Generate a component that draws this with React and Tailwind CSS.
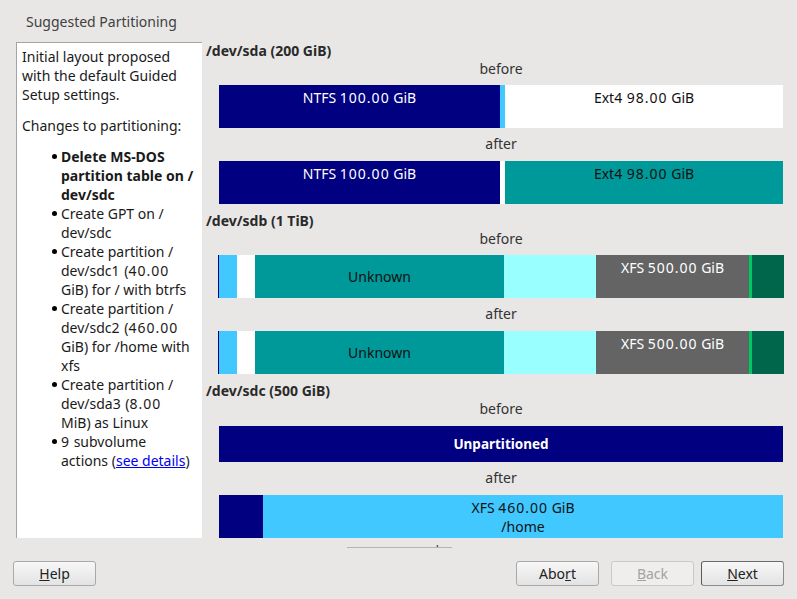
import React from "react";

function D({ children }) {
  return <span className="tracking-[1px]">{children}</span>;
}

function Seg({ w, bg, children, className = "" }) {
  return (
    <div
      className={`shrink-0 h-full overflow-hidden whitespace-nowrap ${bg} ${className}`}
      style={w ? { width: w } : undefined}
    >
      {children}
    </div>
  );
}

function Label({ children, className = "" }) {
  return (
    <div className={`ml-[13px] w-[564px] h-[18px] leading-[18px] text-center text-[14px] text-[#333333] ${className}`}>
      {children}
    </div>
  );
}

function Header({ children, className = "" }) {
  return (
    <div className={`h-[18px] leading-[18px] text-[14px] font-bold text-[#2a2a2a] ${className}`}>
      {children}
    </div>
  );
}

function Btn({ children, disabled, primary, className = "" }) {
  return (
    <div
      className={`h-[25px] w-[83px] rounded-[3px] border flex items-center justify-center text-[14px] ${
        disabled
          ? "border-[#c9c9c9] bg-[#efeeed] text-[#a3a3a3]"
          : primary
          ? "border-[#8c8c8c] border-l-[#5a5a5a] border-t-[#6a6a6a] bg-gradient-to-b from-[#f7f7f7] to-[#e3e3e3] text-[#222222]"
          : "border-[#a9a9a9] bg-gradient-to-b from-[#f7f7f7] to-[#e3e3e3] text-[#222222]"
      } ${className}`}
    >
      {children}
    </div>
  );
}

export default function App() {
  return (
    <div className="w-[797px] h-[599px] bg-[#e8e7e6] font-['Noto_Sans',sans-serif] flex flex-col overflow-hidden">
      {/* Title */}
      <div className="h-[42px] pl-[26px] pt-[12px] text-[14px] leading-[20px] text-[#404040]">
        Suggested Partitioning
      </div>

      {/* Main */}
      <div className="flex h-[496px]">
        {/* Left panel */}
        <div className="ml-[16px] w-[186px] shrink-0 bg-white border-l border-t border-[#a4a4a4] pl-[5px] pt-[4px] text-[14px] leading-[19px] text-[#1a1a1a] whitespace-nowrap overflow-hidden">
          <div>
            Initial layout proposed
            <br />
            with the default Guided
            <br />
            Setup settings.
          </div>
          <div className="mt-[12px]">Changes to partitioning:</div>
          <div className="mt-[12px] ml-[30px]">
            {[
              <b key="b">Delete MS-DOS<br />partition table on /<br />dev/sdc</b>,
              <span key="s">Create GPT on /<br />dev/sdc</span>,
              <span key="s">Create partition /<br />dev/sdc<D>1</D> (<D>40.00</D><br />GiB) for / with btrfs</span>,
              <span key="s">Create partition /<br />dev/sdc<D>2</D> (<D>460.00</D><br />GiB) for /home with<br />xfs</span>,
              <span key="s">Create partition /<br />dev/sda<D>3</D> (<D>8.00</D><br />MiB) as Linux</span>,
              <span key="s">
                <D>9</D> subvolume
                <br />
                actions (<span className="text-[#0000ee] underline">see details</span>)
              </span>,
            ].map((item, i) => (
              <div key={i} className="flex">
                <div className="w-[5px] h-[5px] rounded-full bg-black mt-[7px] mr-[4px] shrink-0" />
                <div>{item}</div>
              </div>
            ))}
          </div>
        </div>

        {/* Right scroll area */}
        <div className="flex-1 pl-[4px] overflow-hidden">
          {/* sda */}
          <Header>/dev/sda (200 GiB)</Header>
          <Label>before</Label>
          <div className="ml-[13px] mt-[7px] w-[564px] h-[43px] flex text-[14px] leading-[18px] text-center">
            <Seg w={281} bg="bg-[#000080]" className="text-white pt-[4px]">NTFS <D>100.00</D> GiB</Seg>
            <Seg w={5} bg="bg-[#40c8ff]" />
            <Seg w={278} bg="bg-white" className="text-[#111111] pt-[4px]">Ext<D>4</D> <D>98.00</D> GiB</Seg>
          </div>
          <Label className="mt-[7px]">after</Label>
          <div className="ml-[13px] mt-[8px] w-[564px] h-[43px] flex text-[14px] leading-[18px] text-center">
            <Seg w={281} bg="bg-[#000080]" className="text-white pt-[4px]">NTFS <D>100.00</D> GiB</Seg>
            <Seg w={5} bg="bg-white" />
            <Seg w={278} bg="bg-[#009999]" className="text-[#111111] pt-[4px]">Ext<D>4</D> <D>98.00</D> GiB</Seg>
          </div>

          {/* sdb */}
          <Header className="mt-[8px]">/dev/sdb (1 TiB)</Header>
          <Label>before</Label>
          <div className="ml-[12px] mt-[7px] w-[566px] h-[43px] flex text-[14px] leading-[18px] text-center">
            <Seg w={1} bg="bg-[#000080]" />
            <Seg w={18} bg="bg-[#40c8ff]" />
            <Seg w={18} bg="bg-white" />
            <Seg w={249} bg="bg-[#009999]" className="text-[#111111] flex items-center justify-center">Unknown</Seg>
            <Seg w={92} bg="bg-[#99ffff]" />
            <Seg w={153} bg="bg-[#646464]" className="text-white pt-[4px]">XFS <D>500.00</D> GiB</Seg>
            <Seg w={3} bg="bg-[#00c864]" />
            <Seg w={32} bg="bg-[#00664b]" />
          </div>
          <Label className="mt-[7px]">after</Label>
          <div className="ml-[12px] mt-[8px] w-[566px] h-[43px] flex text-[14px] leading-[18px] text-center">
            <Seg w={1} bg="bg-[#000080]" />
            <Seg w={18} bg="bg-[#40c8ff]" />
            <Seg w={18} bg="bg-white" />
            <Seg w={249} bg="bg-[#009999]" className="text-[#111111] flex items-center justify-center">Unknown</Seg>
            <Seg w={92} bg="bg-[#99ffff]" />
            <Seg w={153} bg="bg-[#646464]" className="text-white pt-[4px]">XFS <D>500.00</D> GiB</Seg>
            <Seg w={3} bg="bg-[#00c864]" />
            <Seg w={32} bg="bg-[#00664b]" />
          </div>

          {/* sdc */}
          <Header className="mt-[8px]">/dev/sdc (500 GiB)</Header>
          <Label>before</Label>
          <div className="ml-[13px] mt-[8px] w-[564px] h-[36px] flex text-[13.5px] leading-[18px] text-center">
            <Seg w={564} bg="bg-[#000080]" className="text-white font-bold flex items-center justify-center">Unpartitioned</Seg>
          </div>
          <Label className="mt-[7px]">after</Label>
          <div className="ml-[13px] mt-[8px] w-[564px] h-[43px] flex text-[14px] leading-[19px] text-center">
            <Seg w={44} bg="bg-[#000080]" />
            <Seg w={520} bg="bg-[#40c8ff]" className="text-[#111111] pt-[3px]">
              XFS <D>460.00</D> GiB
              <br />
              /home
            </Seg>
          </div>
        </div>
      </div>

      {/* clipped sliver below scroll area */}
      <div className="ml-[347px] mt-[7px] w-[105px] h-[3px] overflow-hidden">
        <div className="-mt-[16px] h-[19px] border-b border-[#b4b4b4] text-center text-[14px] leading-[18px] text-[#444444]">
          Guided Setup
        </div>
      </div>

      {/* Buttons */}
      <div className="mt-[13px] flex items-start">
        <Btn className="ml-[13px]">
          <span><span className="underline">H</span>elp</span>
        </Btn>
        <div className="flex-1" />
        <Btn>
          <span>Abo<span className="underline">r</span>t</span>
        </Btn>
        <Btn disabled className="ml-[12px]">
          <span><span className="underline">B</span>ack</span>
        </Btn>
        <Btn primary className="ml-[7px] mr-[13px]">
          <span><span className="underline">N</span>ext</span>
        </Btn>
      </div>
    </div>
  );
}
